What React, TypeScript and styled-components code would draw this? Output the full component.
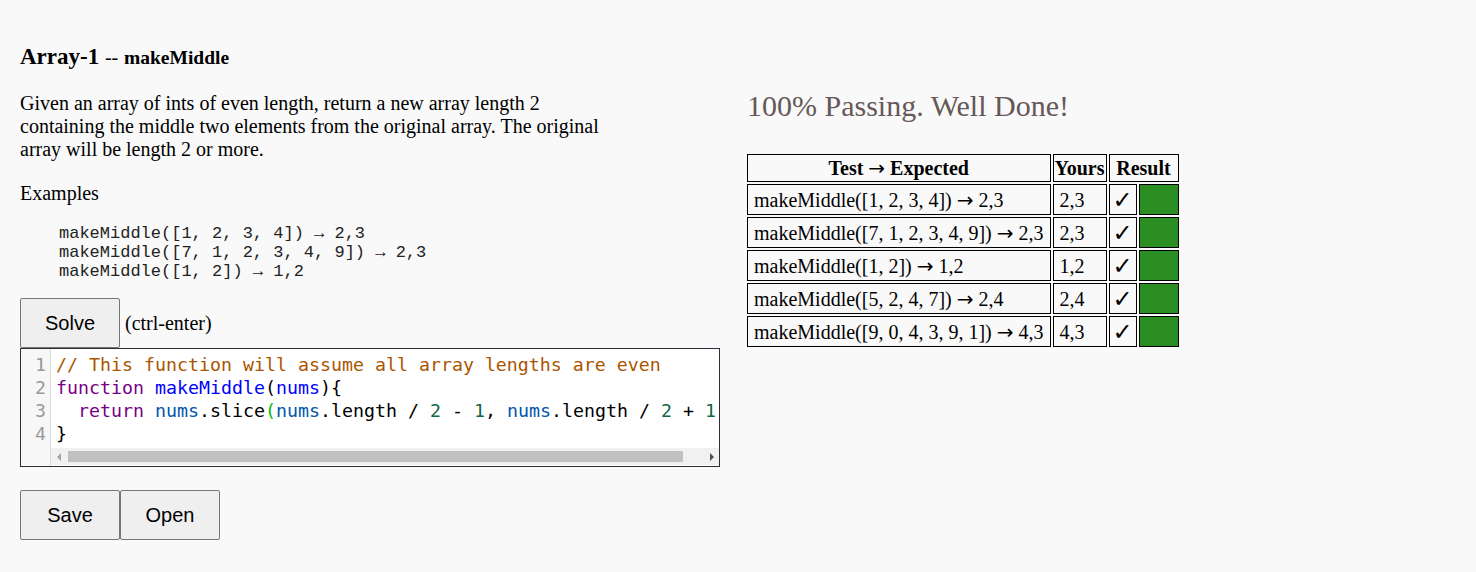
import React from "react";
import styled, { createGlobalStyle } from "styled-components";

const GlobalStyle = createGlobalStyle`
  body {
    margin: 0;
    background: #f9f9f9;
    font-family: "Liberation Serif", "Times New Roman", serif;
    color: #000;
  }
`;

const Page = styled.div`
  display: flex;
  align-items: flex-start;
  padding: 43px 20px 0 20px;
`;

const LeftCol = styled.div`
  width: 700px;
  flex-shrink: 0;
`;

const RightCol = styled.div`
  margin-left: 27px;
  padding-top: 46px;
`;

const Title = styled.h2`
  margin: 0;
  font-size: 23px;
  line-height: 27px;
  font-weight: bold;
`;

const Dashes = styled.span`
  font-size: 20px;
  font-weight: normal;
`;

const SubTitle = styled.span`
  font-size: 19.5px;
`;

const Description = styled.p`
  margin: 21px 0 0 0;
  width: 590px;
  font-size: 20px;
  line-height: 23px;
`;

const Label = styled.p`
  margin: 21px 0 0 0;
  font-size: 20px;
  line-height: 23px;
`;

const Examples = styled.pre`
  margin: 19px 0 0 39px;
  font-family: "Liberation Mono", "Courier New", monospace;
  font-size: 17px;
  line-height: 19px;
  color: #222;
`;

const SolveRow = styled.div`
  display: flex;
  align-items: center;
  gap: 5px;
  margin-top: 17px;
`;

const Button = styled.button`
  width: 100px;
  height: 50px;
  background: #efefef;
  border: 1px solid #767676;
  border-radius: 2px;
  font-family: "Liberation Sans", Arial, sans-serif;
  font-size: 20px;
  color: #000;
  padding: 0;
  cursor: pointer;
`;

const Hint = styled.span`
  font-size: 20px;
`;

const Editor = styled.div`
  display: flex;
  width: 700px;
  height: 119px;
  box-sizing: border-box;
  border: 1px solid #2e2e3a;
  background: #fff;
  overflow: hidden;
`;

const Gutter = styled.div`
  width: 29px;
  flex-shrink: 0;
  background: #f7f7f7;
  border-right: 1px solid #ddd;
  padding-top: 4px;
`;

const LineNo = styled.div`
  font-family: "DejaVu Sans Mono", Consolas, monospace;
  font-size: 18.27px;
  line-height: 23px;
  color: #999;
  text-align: right;
  padding-right: 4px;
`;

const CodeSide = styled.div`
  flex: 1;
  display: flex;
  flex-direction: column;
  min-width: 0;
`;

const CodeArea = styled.div`
  flex: 1;
  overflow: hidden;
  padding: 4px 0 0 5px;
`;

const CodeLine = styled.div`
  font-family: "DejaVu Sans Mono", Consolas, monospace;
  font-size: 18.27px;
  line-height: 23px;
  white-space: pre;
  color: #000;
`;

const Tok = styled.span<{ $c: string }>`
  color: ${(p) => p.$c};
`;

const Scrollbar = styled.div`
  height: 17px;
  background: #f1f1f1;
  display: flex;
  align-items: center;
  margin-bottom: 1px;
`;

const ScrollArrow = styled.div<{ $dir: "left" | "right"; $dim?: boolean }>`
  width: 15px;
  height: 17px;
  display: flex;
  align-items: center;
  justify-content: center;
  &::before {
    content: "";
    width: 0;
    height: 0;
    border-top: 4px solid transparent;
    border-bottom: 4px solid transparent;
    ${(p) =>
      p.$dir === "left"
        ? `border-right: 4px solid ${p.$dim ? "#a3a3a3" : "#505050"};`
        : `border-left: 4px solid ${p.$dim ? "#a3a3a3" : "#505050"};`}
  }
`;

const ScrollTrack = styled.div`
  flex: 1;
  height: 11px;
  display: flex;
  align-items: center;
`;

const ScrollThumb = styled.div`
  height: 11px;
  background: #c1c1c1;
  margin-left: 2px;
`;

const BottomRow = styled.div`
  display: flex;
  margin-top: 23px;
`;

const PassHeading = styled.h2`
  margin: 0;
  font-size: 30px;
  line-height: 34px;
  font-weight: normal;
  color: #665858;
`;

const Table = styled.table`
  margin-top: 29px;
  border-collapse: separate;
  border-spacing: 2px;
  margin-left: -2px;
  font-size: 20px;
`;

const Th = styled.th`
  border: 1px solid #000;
  height: 26px;
  padding: 0;
  font-weight: bold;
  line-height: 22px;
`;

const Td = styled.td<{ $w?: number; $ok?: boolean }>`
  border: 1px solid #000;
  height: 29px;
  padding: 0 6px;
  line-height: 22px;
  white-space: nowrap;
  ${(p) => (p.$w ? `width: ${p.$w}px; box-sizing: border-box;` : "")}
  ${(p) => (p.$ok ? "background: #2b8e23;" : "")}
`;

const Arrow = styled.span`
  font-family: "DejaVu Sans", sans-serif;
  font-weight: normal;
  font-size: 20px;
`;

const CheckCell = styled.td`
  border: 1px solid #000;
  width: 28px;
  box-sizing: border-box;
  padding: 0;
  text-align: center;
  font-family: "DejaVu Sans", sans-serif;
  font-size: 24px;
  font-weight: bold;
  line-height: 22px;
`;

const tests = [
  { args: "makeMiddle([1, 2, 3, 4])", exp: "2,3", yours: "2,3" },
  { args: "makeMiddle([7, 1, 2, 3, 4, 9])", exp: "2,3", yours: "2,3" },
  { args: "makeMiddle([1, 2])", exp: "1,2", yours: "1,2" },
  { args: "makeMiddle([5, 2, 4, 7])", exp: "2,4", yours: "2,4" },
  { args: "makeMiddle([9, 0, 4, 3, 9, 1])", exp: "4,3", yours: "4,3" },
];

const C = {
  comment: "#aa5500",
  keyword: "#770088",
  def: "#0000ff",
  variable: "#0055aa",
  number: "#116644",
  bracket: "#00bb00",
};

export default function App() {
  return (
    <>
      <GlobalStyle />
      <Page>
        <LeftCol>
          <Title>
            Array-1 <Dashes>--</Dashes> <SubTitle>makeMiddle</SubTitle>
          </Title>
          <Description>
            Given an array of ints of even length, return a new array length 2
            containing the middle two elements from the original array. The
            original array will be length 2 or more.
          </Description>
          <Label>Examples</Label>
          <Examples>
            {"makeMiddle([1, 2, 3, 4]) → 2,3\nmakeMiddle([7, 1, 2, 3, 4, 9]) → 2,3\nmakeMiddle([1, 2]) → 1,2"}
          </Examples>
          <SolveRow>
            <Button>Solve</Button>
            <Hint>(ctrl-enter)</Hint>
          </SolveRow>
          <Editor>
            <Gutter>
              {[1, 2, 3, 4].map((n) => (
                <LineNo key={n}>{n}</LineNo>
              ))}
            </Gutter>
            <CodeSide>
              <CodeArea>
                <CodeLine>
                  <Tok $c={C.comment}>// This function will assume all array lengths are even</Tok>
                </CodeLine>
                <CodeLine>
                  <Tok $c={C.keyword}>function</Tok> <Tok $c={C.def}>makeMiddle</Tok>(
                  <Tok $c={C.def}>nums</Tok>){"{"}
                </CodeLine>
                <CodeLine>
                  {"  "}
                  <Tok $c={C.keyword}>return</Tok> <Tok $c={C.variable}>nums</Tok>.slice
                  <Tok $c={C.bracket}>(</Tok>
                  <Tok $c={C.variable}>nums</Tok>.length / <Tok $c={C.number}>2</Tok> -{" "}
                  <Tok $c={C.number}>1</Tok>, <Tok $c={C.variable}>nums</Tok>.length /{" "}
                  <Tok $c={C.number}>2</Tok> + <Tok $c={C.number}>1</Tok>
                  <Tok $c={C.bracket}>)</Tok>;
                </CodeLine>
                <CodeLine>{"}"}</CodeLine>
              </CodeArea>
              <Scrollbar>
                <ScrollArrow $dir="left" $dim />
                <ScrollTrack>
                  <ScrollThumb style={{ width: 615 }} />
                </ScrollTrack>
                <ScrollArrow $dir="right" />
              </Scrollbar>
            </CodeSide>
          </Editor>
          <BottomRow>
            <Button>Save</Button>
            <Button>Open</Button>
          </BottomRow>
        </LeftCol>
        <RightCol>
          <PassHeading>100% Passing. Well Done!</PassHeading>
          <Table>
            <thead>
              <tr>
                <Th>
                  Test <Arrow>→</Arrow> Expected
                </Th>
                <Th>Yours</Th>
                <Th colSpan={2}>Result</Th>
              </tr>
            </thead>
            <tbody>
              {tests.map((t) => (
                <tr key={t.args}>
                  <Td>
                    {t.args} <Arrow>→</Arrow> {t.exp}
                  </Td>
                  <Td $w={54}>{t.yours}</Td>
                  <CheckCell>✓</CheckCell>
                  <Td $w={40} $ok />
                </tr>
              ))}
            </tbody>
          </Table>
        </RightCol>
      </Page>
    </>
  );
}
